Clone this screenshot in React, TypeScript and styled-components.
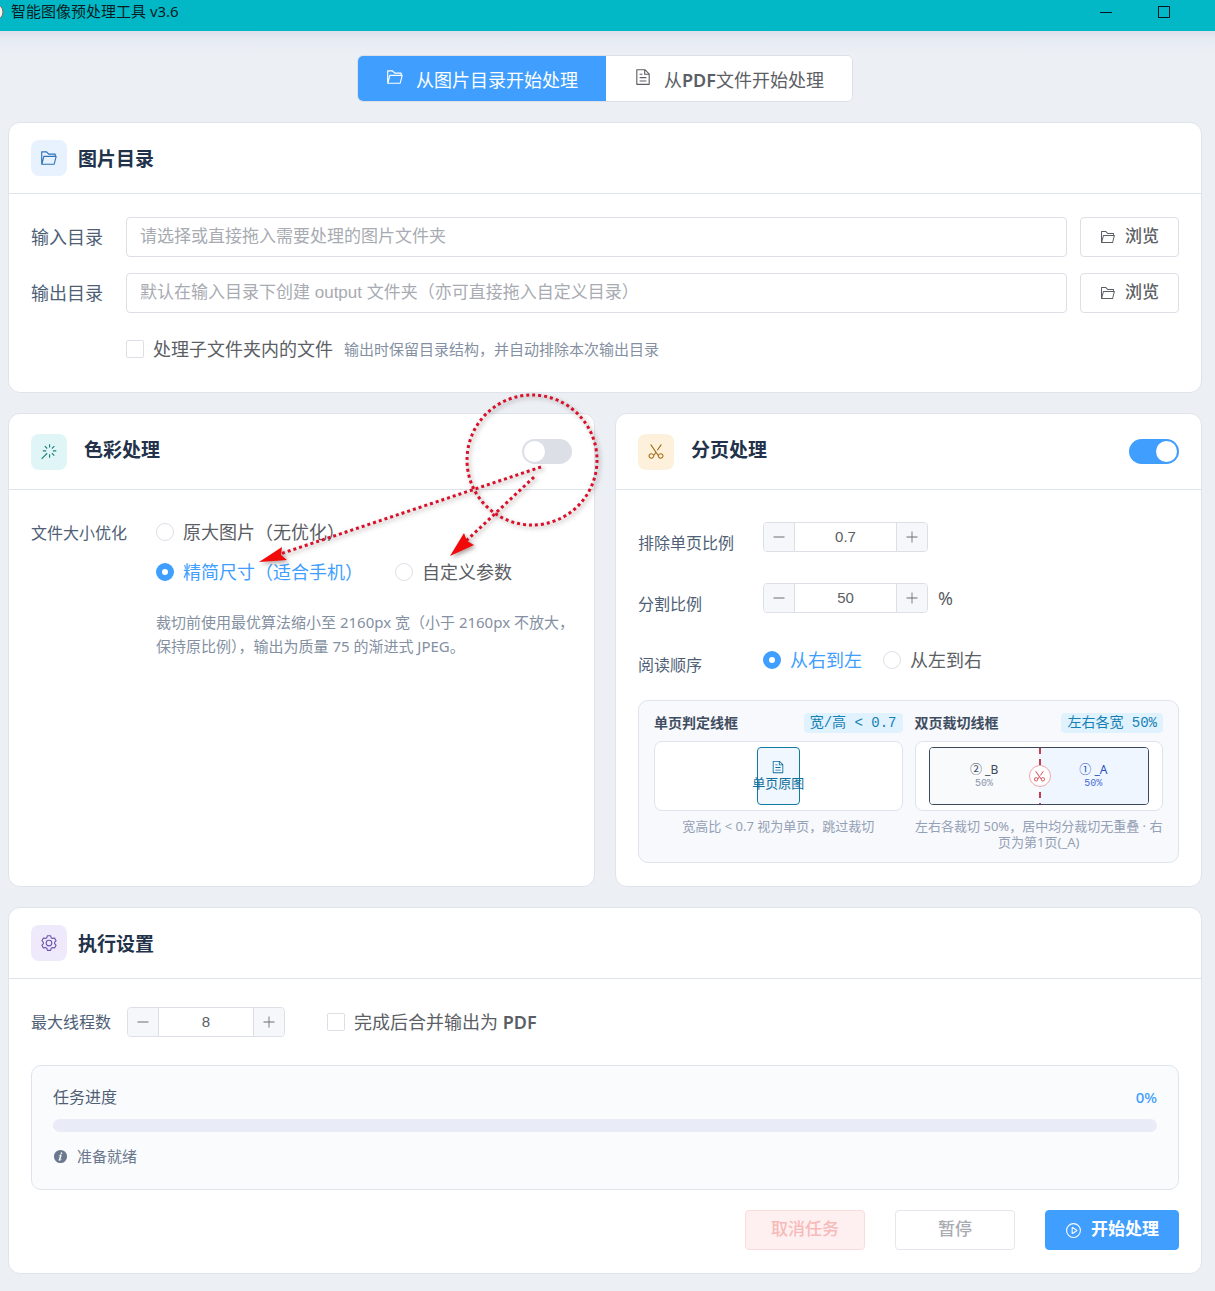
import React, { useState } from "react";
import styled, { createGlobalStyle, css } from "styled-components";

const sans = `"Noto Sans", "Noto Sans CJK SC", sans-serif`;
const control = `"Liberation Sans", "Noto Sans CJK SC", sans-serif`;
const mono = `"Liberation Mono", "Noto Sans CJK SC", monospace`;

const color = {
  primary: "#409eff",
  line: "#dfe4ec",
  border: "#dcdfe6",
  text: "#5b5e64",
  label: "#4f5f76",
  muted: "#8490a2",
  title: "#22324a",
  soft: "#f8f9fc",
};

const GlobalStyle = createGlobalStyle`
  *, *::before, *::after { box-sizing: border-box; }
  body { margin: 0; background: #ecf0f5; }
  button, input { font: inherit; color: inherit; }
  button { cursor: pointer; }
`;

/* ---------- icons ---------- */

const paths = {
  folder:
    "M878.08 448H241.92l-96 384h636.16l96-384zM832 384v-64H485.76L357.504 192H128v448l57.92-231.744A32 32 0 0 1 216.96 384H832zm-24.96 512H96a32 32 0 0 1-32-32V160a32 32 0 0 1 32-32h287.872l128.384 128H864a32 32 0 0 1 32 32v96h23.04a32 32 0 0 1 31.04 39.744l-112 448A32 32 0 0 1 807.04 896z",
  document:
    "M832 384H576V128H192v768h640V384zm-26.496-64L640 154.496V320h165.504zM160 64h480l256 256v608a32 32 0 0 1-32 32H160a32 32 0 0 1-32-32V96a32 32 0 0 1 32-32zm160 448h384v64H320v-64zm0-192h160v64H320v-64zm0 384h384v64H320v-64z",
  wand:
    "M512 64h64v192h-64V64zm0 576h64v192h-64V640zM160 480v-64h192v64H160zm576 0v-64h192v64H736zM249.856 199.04l45.248-45.184L430.848 289.6 385.6 334.848 249.856 199.104zM657.152 606.4l45.248-45.248 135.744 135.744-45.248 45.248L657.152 606.4zM114.048 923.2 68.8 877.952l316.8-316.8 45.248 45.248-316.8 316.8zM702.4 334.848 657.152 289.6l135.744-135.744 45.248 45.248L702.4 334.848z",
  scissors:
    "m512.064 578.368-106.88 152.768a160 160 0 1 1-23.36-78.208L472.96 522.56 196.864 128.256a32 32 0 1 1 52.48-36.736l393.024 561.344a160 160 0 1 1-23.36 78.208l-106.88-152.704zm54.4-189.248 208.384-297.6a32 32 0 0 1 52.48 36.736l-221.76 316.672-39.04-55.808zm-376.32 425.856a96 96 0 1 0 110.144-157.248 96 96 0 0 0-110.08 157.248zm643.84 0a96 96 0 1 0-110.08-157.248 96 96 0 0 0 110.08 157.248z",
  gear:
    "M600.704 64a32 32 0 0 1 30.464 22.208l35.2 109.376c14.784 7.232 28.928 15.36 42.432 24.512l112.384-24.192a32 32 0 0 1 34.432 15.36L944.32 364.8a32 32 0 0 1-4.032 37.504l-77.12 85.12a357.12 357.12 0 0 1 0 49.024l77.12 85.248a32 32 0 0 1 4.032 37.504l-88.704 153.6a32 32 0 0 1-34.432 15.296L708.8 803.904c-13.44 9.088-27.648 17.28-42.368 24.512l-35.264 109.376A32 32 0 0 1 600.704 960H423.296a32 32 0 0 1-30.464-22.208L357.696 828.48a351.616 351.616 0 0 1-42.56-24.64l-112.32 24.256a32 32 0 0 1-34.432-15.36L79.68 659.2a32 32 0 0 1 4.032-37.504l77.12-85.248a357.12 357.12 0 0 1 0-48.896l-77.12-85.248A32 32 0 0 1 79.68 364.8l88.704-153.6a32 32 0 0 1 34.432-15.296l112.32 24.256c13.568-9.152 27.776-17.408 42.56-24.64l35.2-109.312A32 32 0 0 1 423.232 64H600.64zm-23.424 64H446.72l-36.352 113.088-24.512 11.968a294.113 294.113 0 0 0-34.816 20.096l-22.656 15.36-116.224-25.088-65.28 113.152 79.68 88.192-1.92 27.136a293.12 293.12 0 0 0 0 40.192l1.92 27.136-79.808 88.192 65.344 113.152 116.224-25.024 22.656 15.296a294.113 294.113 0 0 0 34.816 20.096l24.512 11.968L446.72 896h130.688l36.48-113.152 24.448-11.904a288.282 288.282 0 0 0 34.752-20.096l22.592-15.296 116.288 25.024 65.28-113.152-79.744-88.192 1.92-27.136a293.12 293.12 0 0 0 0-40.256l-1.92-27.136 79.808-88.128-65.344-113.152-116.288 24.96-22.592-15.232a287.616 287.616 0 0 0-34.752-20.096l-24.448-11.904L577.344 128zM512 320a192 192 0 1 1 0 384 192 192 0 0 1 0-384zm0 64a128 128 0 1 0 0 256 128 128 0 0 0 0-256z",
  play:
    "M512 64a448 448 0 1 1 0 896 448 448 0 0 1 0-896zm0 832a384 384 0 0 0 0-768 384 384 0 0 0 0 768zm-48-247.616L668.608 512 464 375.616v272.768zm10.624-342.656 249.472 166.336a48 48 0 0 1 0 79.872L474.624 718.272A48 48 0 0 1 400 678.336V345.6a48 48 0 0 1 74.624-39.936z",
  info:
    "M512 64a448 448 0 1 1 0 896.064A448 448 0 0 1 512 64zm67.2 275.072c33.28 0 60.288-23.104 60.288-57.344s-27.072-57.344-60.288-57.344c-33.28 0-60.16 23.104-60.16 57.344s26.88 57.344 60.16 57.344zM590.912 699.2c0-6.848 2.368-24.64 1.024-34.752l-52.608 60.544c-10.88 11.456-24.512 19.392-30.912 17.28a12.992 12.992 0 0 1-8.256-14.72l87.68-276.992c7.168-35.136-12.544-67.2-54.336-71.296-44.096 0-108.992 44.736-148.48 101.504 0 6.784-1.28 23.68.064 33.792l52.544-60.608c10.88-11.328 23.552-19.328 29.952-17.152a12.8 12.8 0 0 1 7.808 16.128L388.48 728.576c-10.048 32.256 8.96 63.872 55.04 71.04 67.84 0 107.904-43.648 147.456-100.416z",
  minus: "M128 544h768a32 32 0 1 0 0-64H128a32 32 0 0 0 0 64z",
  plus: "M480 480V128a32 32 0 0 1 64 0v352h352a32 32 0 1 1 0 64H544v352a32 32 0 1 1-64 0V544H128a32 32 0 0 1 0-64h352z",
};

type IconName = keyof typeof paths;

const Svg = styled.svg`
  display: block;
  flex: none;
  fill: currentColor;
`;

const Icon = ({ name, size }: { name: IconName; size: number }) => (
  <Svg viewBox="0 0 1024 1024" width={size} height={size} aria-hidden="true">
    <path d={paths[name]} />
  </Svg>
);

/* ---------- window frame ---------- */

const Page = styled.div`
  min-height: 100vh;
  font-family: ${sans};
  color: ${color.text};
  background: linear-gradient(#dcdfea, #e6eaf2 8px, #ecf0f5 22px) 0 31px no-repeat #ecf0f5;
`;

const TitleBar = styled.header`
  display: flex;
  align-items: center;
  height: 31px;
  padding-right: 38px;
  background: #02b8c7;
  color: #071c22;
`;

const AppName = styled.h1`
  flex: 1;
  margin: 0 0 9px 7px;
  font-size: 15px;
  line-height: 22px;
  font-weight: 400;
`;

const WindowButton = styled.button`
  display: grid;
  place-items: center;
  width: 26px;
  height: 24px;
  margin: 0 0 7px 32px;
  padding: 0;
  border: 0;
  background: none;
`;

const Main = styled.main`
  display: flex;
  flex-direction: column;
  gap: 20px;
  padding: 24px 13px 17px 8px;
`;

/* ---------- mode switch ---------- */

const Tabs = styled.div`
  display: flex;
  align-self: center;
  height: 47px;
  border-radius: 6px;
  overflow: hidden;
  border: 1px solid ${color.border};
  background: #fff;
`;

const Tab = styled.button<{ $active?: boolean }>`
  display: flex;
  align-items: center;
  gap: 12px;
  padding: 0 28px;
  border: 0;
  font-size: 18px;
  line-height: 26px;
  background: ${(p) => (p.$active ? color.primary : "#fff")};
  color: ${(p) => (p.$active ? "#fff" : color.text)};

  svg { margin-bottom: 3px; }
  > span { padding-top: 2px; }
`;

const Strong = styled.span`
  font-weight: 600;
`;

/* ---------- cards ---------- */

const Card = styled.section`
  position: relative;
  display: flex;
  flex-direction: column;
  min-width: 0;
  border: 1px solid ${color.line};
  border-radius: 12px;
  background: #fff;
`;

const CardTitle = styled.h2`
  flex: 1;
  margin: 0;
  font-size: 19px;
  line-height: 28px;
  font-weight: 700;
  color: ${color.title};
`;

const CardHeader = styled.div<{ $tall?: boolean }>`
  display: flex;
  align-items: center;
  gap: ${(p) => (p.$tall ? 17 : 11)}px;
  height: ${(p) => (p.$tall ? 76 : 71)}px;
  padding: 0 22px;
  border-bottom: 1px solid ${color.line};

  ${CardTitle} {
    ${(p) => (p.$tall ? "padding-bottom: 4px;" : "padding-top: 2px;")}
  }
`;

const tones = {
  blue: ["#e8f2ff", "#2f72b8"],
  teal: ["#e0f6f6", "#20807f"],
  amber: ["#fdf1dc", "#a8701c"],
  violet: ["#eeeafc", "#6a55b0"],
};

const IconTile = styled.span<{ $tone: keyof typeof tones }>`
  display: grid;
  place-items: center;
  width: 36px;
  height: 36px;
  border-radius: 8px;
  background: ${(p) => tones[p.$tone][0]};
  color: ${(p) => tones[p.$tone][1]};
`;

const CardBody = styled.div<{ $top: number }>`
  padding: ${(p) => p.$top}px 22px 23px;
`;

const Columns = styled.div`
  display: grid;
  grid-template-columns: 1fr 1fr;
  gap: 20px;
`;

/* ---------- directory form ---------- */

const Fields = styled(CardBody)`
  display: grid;
  grid-template-columns: 82px 1fr auto;
  gap: 16px 13px;
  align-items: center;
`;

const FieldLabel = styled.label`
  font-size: 18px;
  line-height: 28px;
  color: ${color.label};
`;

const TextInput = styled.input`
  width: 100%;
  height: 40px;
  padding: 0 13px;
  border: 1px solid ${color.border};
  border-radius: 4px;
  background: #fff;
  font-family: ${control};
  font-size: 17px;

  &::placeholder { color: #a8abb2; opacity: 1; }
`;

const variants = {
  plain: css`border-color: ${color.border}; background: #fff; color: ${color.text};`,
  primary: css`border-color: ${color.primary}; background: ${color.primary}; color: #fff; font-weight: 700;`,
  danger: css`border-color: #fbdcdc; background: #fef0f0; color: #f7b9b9;`,
  idle: css`border-color: #e4e7ed; background: #fff; color: #a8abb2;`,
};

const Button = styled.button<{ $variant: keyof typeof variants; $wide?: boolean }>`
  display: flex;
  align-items: center;
  justify-content: center;
  gap: 9px;
  height: 40px;
  min-width: ${(p) => (p.$wide ? 120 : 99)}px;
  padding: 0 19px;
  border: 1px solid;
  border-radius: 4px;
  font-family: ${control};
  font-size: 17px;
  line-height: 24px;
  font-weight: 500;
  ${(p) => variants[p.$variant]}
`;

const CheckRow = styled.div`
  grid-column: 2 / -1;
  display: flex;
  align-items: center;
  gap: 11px;
  height: 40px;
`;

const ChoiceLabel = styled.label<{ $active?: boolean }>`
  display: flex;
  align-items: center;
  gap: 9px;
  font-size: 18px;
  line-height: 28px;
  white-space: nowrap;
  color: ${(p) => (p.$active ? color.primary : color.text)};
`;

const CheckBox = styled.input`
  appearance: none;
  flex: none;
  width: 18px;
  height: 18px;
  margin: 0;
  border: 1px solid ${color.border};
  border-radius: 2px;
  background: #fff;

  &:checked { background: ${color.primary}; border-color: ${color.primary}; }
`;

const RadioDot = styled.input`
  appearance: none;
  flex: none;
  width: 18px;
  height: 18px;
  margin: 0;
  border: 1px solid ${color.border};
  border-radius: 50%;
  background: #fff;

  &:checked { border: 6px solid ${color.primary}; }
`;

const Hint = styled.span`
  font-size: 15px;
  line-height: 24px;
  color: ${color.muted};
`;

/* ---------- settings rows ---------- */

const Toggle = styled.input`
  appearance: none;
  width: 50px;
  height: 25px;
  margin: 0;
  padding: 2px;
  border-radius: 13px;
  background: ${color.border};

  &::before {
    content: "";
    display: block;
    width: 21px;
    height: 21px;
    border-radius: 50%;
    background: #fff;
  }
  &:checked { background: ${color.primary}; }
  &:checked::before { margin-left: auto; }
`;

const SettingRow = styled.div`
  display: grid;
  grid-template-columns: 125px 1fr;
  align-items: start;
`;

const SettingRows = styled.div`
  display: grid;
  gap: 19px;
`;

const SettingLabel = styled.span`
  font-size: 16px;
  line-height: 42px;
  white-space: nowrap;
  color: ${color.label};
`;

const RadioGroup = styled.div<{ $height: number; $gap: number }>`
  display: flex;
  flex-wrap: wrap;
  column-gap: ${(p) => p.$gap}px;

  label { height: ${(p) => p.$height}px; }
`;

const Note = styled.p`
  margin: 18px -8px 0 0;
  font-size: 15px;
  line-height: 24px;
  color: ${color.muted};
`;

const StepperLine = styled.div`
  display: flex;
  align-items: center;
  gap: 10px;
  height: 30px;
  font-size: 18px;
`;

const StepperBox = styled.div<{ $width: number }>`
  display: flex;
  width: ${(p) => p.$width}px;
  height: 30px;
  border: 1px solid ${color.border};
  border-radius: 4px;
  overflow: hidden;
`;

const StepButton = styled.button`
  display: grid;
  place-items: center;
  flex: none;
  width: 30px;
  padding: 0;
  border: 0;
  background: #f5f7fa;
  color: #6b6e74;
`;

const StepInput = styled.input`
  flex: 1;
  min-width: 0;
  padding: 0 0 1px;
  border: 0;
  border-left: 1px solid ${color.border};
  border-right: 1px solid ${color.border};
  background: #fff;
  text-align: center;
  font-family: ${control};
  font-size: 15px;
`;

type StepperProps = { id: string; label: string; value: number; step: number; width: number; onChange: (n: number) => void };

const Stepper = ({ id, label, value, step, width, onChange }: StepperProps) => {
  const shift = (by: number) => onChange(Math.max(0, Math.round((value + by) * 10) / 10));
  return (
    <StepperBox $width={width}>
      <StepButton type="button" aria-label={`${label} -`} onClick={() => shift(-step)}>
        <Icon name="minus" size={14} />
      </StepButton>
      <StepInput id={id} inputMode="decimal" value={value} onChange={(e) => onChange(Number(e.target.value) || 0)} />
      <StepButton type="button" aria-label={`${label} +`} onClick={() => shift(step)}>
        <Icon name="plus" size={14} />
      </StepButton>
    </StepperBox>
  );
};

type RadioProps = { name: string; label: string; checked: boolean; onSelect: () => void };

const Radio = ({ name, label, checked, onSelect }: RadioProps) => (
  <ChoiceLabel $active={checked}>
    <RadioDot type="radio" name={name} checked={checked} onChange={onSelect} />
    {label}
  </ChoiceLabel>
);

/* ---------- split preview ---------- */

const Preview = styled.div`
  display: grid;
  grid-template-columns: 1fr 1fr;
  gap: 12px;
  margin-top: 14px;
  padding: 11px 15px 12px;
  border: 1px solid ${color.line};
  border-radius: 10px;
  background: ${color.soft};
`;

const PreviewHead = styled.div`
  display: flex;
  align-items: center;
  justify-content: space-between;
  height: 21px;
  margin-bottom: 8px;
  white-space: nowrap;
`;

const PreviewTitle = styled.h3`
  margin: 0;
  font-size: 14px;
  line-height: 20px;
  font-weight: 700;
  color: #3f4d61;
`;

const Badge = styled.span`
  padding: 0 6px;
  border-radius: 4px;
  background: #e0f2fe;
  font-family: ${mono};
  font-size: 14px;
  line-height: 20px;
  color: #1580b4;
`;

const Frame = styled.div`
  display: flex;
  justify-content: center;
  height: 70px;
  padding: 5px 13px;
  border: 1px solid ${color.line};
  border-radius: 8px;
  background: #fff;
`;

const SinglePage = styled.div`
  display: flex;
  flex-direction: column;
  align-items: center;
  justify-content: center;
  width: 43px;
  border: 1px solid #0f7ba3;
  border-radius: 4px;
  background: #f0f7fe;
  font-size: 13px;
  line-height: 18px;
  white-space: nowrap;
  color: #0f6f9c;
`;

const Spread = styled.div`
  position: relative;
  display: grid;
  grid-template-columns: 1fr 1fr;
  flex: 1;
  border: 1px solid #3b4a5c;
  border-radius: 4px;
  overflow: hidden;
`;

const Half = styled.div<{ $first?: boolean }>`
  display: flex;
  flex-direction: column;
  align-items: center;
  justify-content: center;
  background: ${(p) => (p.$first ? "#eff6ff" : "#f8fafc")};
  color: ${(p) => (p.$first ? "#2450c0" : "#3f4958")};
  font-size: 12px;
  line-height: 15px;
  font-family: ${sans};
`;

const Share = styled.small<{ $first?: boolean }>`
  font-family: ${mono};
  font-size: 10px;
  line-height: 13px;
  color: ${(p) => (p.$first ? "#4a6bd6" : "#8c97a8")};
`;

const CutLine = styled.div`
  position: absolute;
  top: 0;
  bottom: 0;
  left: 50%;
  width: 2px;
  background: repeating-linear-gradient(#c0404f 0 6px, transparent 6px 11px);
`;

const CutMark = styled.span`
  position: absolute;
  top: 50%;
  left: 50%;
  display: grid;
  place-items: center;
  width: 22px;
  height: 22px;
  margin: -11px 0 0 -10px;
  border: 1px solid #f3a6ab;
  border-radius: 50%;
  background: #fff;
  color: #d64550;
`;

const Caption = styled.p`
  margin: 7px 0 0;
  font-size: 13px;
  line-height: 16px;
  text-align: center;
  color: #93a0b5;
`;

/* ---------- run panel ---------- */

const RunRow = styled.div`
  display: flex;
  align-items: center;
  gap: 16px;
  height: 30px;

  > label:last-child { margin-left: 26px; }
`;

const RunLabel = styled.label`
  font-size: 16px;
  line-height: 30px;
  color: ${color.label};
`;

const ProgressPanel = styled.div`
  margin-top: 28px;
  padding: 19px 21px 21px;
  border: 1px solid ${color.line};
  border-radius: 10px;
  background: #fafbfd;
`;

const ProgressHead = styled.div`
  display: flex;
  justify-content: space-between;
  font-size: 16px;
  line-height: 24px;
  color: ${color.label};
`;

const Percent = styled.span`
  font-size: 15px;
  font-weight: 500;
  color: ${color.primary};
`;

const Track = styled.div`
  height: 13px;
  margin: 10px 0 12px;
  border-radius: 7px;
  background: #e9ecf6;
  overflow: hidden;
`;

const Fill = styled.div`
  height: 100%;
  background: ${color.primary};
`;

const Status = styled.div`
  display: flex;
  align-items: center;
  gap: 9px;
  font-size: 15px;
  line-height: 24px;
  color: #6b788e;
`;

const Actions = styled.div`
  display: flex;
  justify-content: flex-end;
  gap: 30px;
  margin-top: 20px;
`;

/* ---------- callout drawn over the colour card ---------- */

const Callout = styled.svg`
  position: absolute;
  top: -29px;
  right: -16px;
  pointer-events: none;
  filter: drop-shadow(2px 2px 2px rgba(90, 60, 60, 0.5));
`;

const ColorCallout = () => (
  <Callout width="360" height="190" viewBox="250 385 360 190" fill="none" aria-hidden="true">
    <g stroke="#d8102a" strokeWidth="3" strokeDasharray="3 3">
      <circle cx="532" cy="460" r="65" />
      <path d="M541 467 280 554" />
      <path d="M534 477 466 541" />
    </g>
    <path fill="#f20a0a" d="M259 562 282 547 281 555 287 560Z" />
    <path fill="#f20a0a" d="M450 556 464 533 467 541 474 545Z" />
  </Callout>
);

/* ---------- page ---------- */

export default function App() {
  const [mode, setMode] = useState("folder");
  const [nested, setNested] = useState(false);
  const [colorOn, setColorOn] = useState(false);
  const [splitOn, setSplitOn] = useState(true);
  const [size, setSize] = useState("compact");
  const [order, setOrder] = useState("rtl");
  const [ratio, setRatio] = useState(0.7);
  const [split, setSplit] = useState(50);
  const [threads, setThreads] = useState(8);
  const [merge, setMerge] = useState(false);
  const progress = 0;

  return (
    <Page>
      <GlobalStyle />
      <TitleBar>
        <Svg width="4" height="22" viewBox="0 0 4 22" aria-hidden="true">
          <circle cx="-5" cy="7" r="8" fill="#f4f4ee" stroke="#7b6a5c" />
        </Svg>
        <AppName>智能图像预处理工具 v3.6</AppName>
        <WindowButton type="button" aria-label="最小化">
          <svg width="12" height="12" viewBox="0 0 12 12" stroke="#06161c">
            <path d="M0 6.5H12" />
          </svg>
        </WindowButton>
        <WindowButton type="button" aria-label="最大化">
          <svg width="12" height="12" viewBox="0 0 12 12" fill="none" stroke="#06161c">
            <rect x="0.5" y="0.5" width="11" height="11" />
          </svg>
        </WindowButton>
      </TitleBar>

      <Main>
        <Tabs>
          <Tab type="button" $active={mode === "folder"} aria-pressed={mode === "folder"} onClick={() => setMode("folder")}>
            <Icon name="folder" size={18} />
            <span>从图片目录开始处理</span>
          </Tab>
          <Tab type="button" $active={mode === "pdf"} aria-pressed={mode === "pdf"} onClick={() => setMode("pdf")}>
            <Icon name="document" size={18} />
            <span>
              从<Strong>PDF</Strong>文件开始处理
            </span>
          </Tab>
        </Tabs>

        <Card>
          <CardHeader>
            <IconTile $tone="blue"><Icon name="folder" size={18} /></IconTile>
            <CardTitle>图片目录</CardTitle>
          </CardHeader>
          <Fields $top={23}>
            <FieldLabel htmlFor="input-dir">输入目录</FieldLabel>
            <TextInput id="input-dir" placeholder="请选择或直接拖入需要处理的图片文件夹" />
            <Button type="button" $variant="plain"><Icon name="folder" size={16} /><span>浏览</span></Button>
            <FieldLabel htmlFor="output-dir">输出目录</FieldLabel>
            <TextInput id="output-dir" placeholder="默认在输入目录下创建 output 文件夹（亦可直接拖入自定义目录）" />
            <Button type="button" $variant="plain"><Icon name="folder" size={16} /><span>浏览</span></Button>
            <CheckRow>
              <ChoiceLabel>
                <CheckBox type="checkbox" checked={nested} onChange={() => setNested(!nested)} />
                处理子文件夹内的文件
              </ChoiceLabel>
              <Hint>输出时保留目录结构，并自动排除本次输出目录</Hint>
            </CheckRow>
          </Fields>
        </Card>

        <Columns>
          <Card>
            <CardHeader $tall>
              <IconTile $tone="teal"><Icon name="wand" size={18} /></IconTile>
              <CardTitle>色彩处理</CardTitle>
              <Toggle type="checkbox" role="switch" aria-label="色彩处理" checked={colorOn} onChange={() => setColorOn(!colorOn)} />
            </CardHeader>
            <CardBody $top={22}>
              <SettingRow>
                <SettingLabel>文件大小优化</SettingLabel>
                <div>
                  <RadioGroup $height={40} $gap={32} role="radiogroup" aria-label="文件大小优化">
                    <Radio name="size" label="原大图片（无优化）" checked={size === "full"} onSelect={() => setSize("full")} />
                    <Radio name="size" label="精简尺寸（适合手机）" checked={size === "compact"} onSelect={() => setSize("compact")} />
                    <Radio name="size" label="自定义参数" checked={size === "custom"} onSelect={() => setSize("custom")} />
                  </RadioGroup>
                  <Note>裁切前使用最优算法缩小至 2160px 宽（小于 2160px 不放大，保持原比例），输出为质量 75 的渐进式 JPEG。</Note>
                </div>
              </SettingRow>
            </CardBody>
            <ColorCallout />
          </Card>

          <Card>
            <CardHeader $tall>
              <IconTile $tone="amber"><Icon name="scissors" size={18} /></IconTile>
              <CardTitle>分页处理</CardTitle>
              <Toggle type="checkbox" role="switch" aria-label="分页处理" checked={splitOn} onChange={() => setSplitOn(!splitOn)} />
            </CardHeader>
            <CardBody $top={32}>
              <SettingRows>
                <SettingRow>
                  <SettingLabel as="label" htmlFor="ratio">排除单页比例</SettingLabel>
                  <StepperLine>
                    <Stepper id="ratio" label="排除单页比例" value={ratio} step={0.1} width={165} onChange={setRatio} />
                  </StepperLine>
                </SettingRow>
                <SettingRow>
                  <SettingLabel as="label" htmlFor="split">分割比例</SettingLabel>
                  <StepperLine>
                    <Stepper id="split" label="分割比例" value={split} step={1} width={165} onChange={setSplit} />
                    %
                  </StepperLine>
                </SettingRow>
                <SettingRow>
                  <SettingLabel>阅读顺序</SettingLabel>
                  <RadioGroup $height={32} $gap={21} role="radiogroup" aria-label="阅读顺序">
                    <Radio name="order" label="从右到左" checked={order === "rtl"} onSelect={() => setOrder("rtl")} />
                    <Radio name="order" label="从左到右" checked={order === "ltr"} onSelect={() => setOrder("ltr")} />
                  </RadioGroup>
                </SettingRow>
              </SettingRows>

              <Preview>
                <div>
                  <PreviewHead>
                    <PreviewTitle>单页判定线框</PreviewTitle>
                    <Badge>宽/高 &lt; 0.7</Badge>
                  </PreviewHead>
                  <Frame>
                    <SinglePage>
                      <Icon name="document" size={14} />
                      <span>单页原图</span>
                    </SinglePage>
                  </Frame>
                  <Caption>宽高比 &lt; 0.7 视为单页，跳过裁切</Caption>
                </div>
                <div>
                  <PreviewHead>
                    <PreviewTitle>双页裁切线框</PreviewTitle>
                    <Badge>左右各宽 50%</Badge>
                  </PreviewHead>
                  <Frame>
                    <Spread>
                      <Half>
                        <span>② _B</span>
                        <Share>50%</Share>
                      </Half>
                      <Half $first>
                        <span>① _A</span>
                        <Share $first>50%</Share>
                      </Half>
                      <CutLine />
                      <CutMark><Icon name="scissors" size={13} /></CutMark>
                    </Spread>
                  </Frame>
                  <Caption>左右各裁切 50%，居中均分裁切无重叠 · 右页为第1页(_A)</Caption>
                </div>
              </Preview>
            </CardBody>
          </Card>
        </Columns>

        <Card>
          <CardHeader>
            <IconTile $tone="violet"><Icon name="gear" size={18} /></IconTile>
            <CardTitle>执行设置</CardTitle>
          </CardHeader>
          <CardBody $top={28}>
            <RunRow>
              <RunLabel htmlFor="threads">最大线程数</RunLabel>
              <Stepper id="threads" label="最大线程数" value={threads} step={1} width={158} onChange={setThreads} />
              <ChoiceLabel>
                <CheckBox type="checkbox" checked={merge} onChange={() => setMerge(!merge)} />
                <span>完成后合并输出为 <Strong>PDF</Strong></span>
              </ChoiceLabel>
            </RunRow>
            <ProgressPanel>
              <ProgressHead>
                <span>任务进度</span>
                <Percent>{progress}%</Percent>
              </ProgressHead>
              <Track role="progressbar" aria-label="任务进度" aria-valuenow={progress} aria-valuemin={0} aria-valuemax={100}>
                <Fill style={{ width: `${progress}%` }} />
              </Track>
              <Status>
                <Icon name="info" size={15} />
                准备就绪
              </Status>
            </ProgressPanel>
            <Actions>
              <Button type="button" $variant="danger" $wide disabled><span>取消任务</span></Button>
              <Button type="button" $variant="idle" $wide disabled><span>暂停</span></Button>
              <Button type="button" $variant="primary" $wide><Icon name="play" size={17} /><span>开始处理</span></Button>
            </Actions>
          </CardBody>
        </Card>
      </Main>
    </Page>
  );
}
